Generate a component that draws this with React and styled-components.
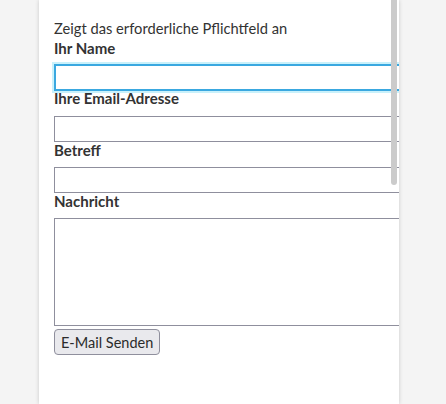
import React from "react";
import styled, { createGlobalStyle } from "styled-components";

const GlobalStyle = createGlobalStyle`
  html, body {
    margin: 0;
    padding: 0;
    background: #f4f4f4;
    height: 100%;
    overflow: hidden;
  }
  #root {
    height: 100%;
  }
`;

const Page = styled.div`
  height: 404px;
  padding-left: 39px;
  overflow: hidden;
`;

const Card = styled.div`
  position: relative;
  width: 360px;
  height: 404px;
  background: #fff;
  box-shadow: 0 0 4px rgba(0, 0, 0, 0.18);
  overflow: hidden;
`;

const Form = styled.form`
  width: 400px;
  margin-top: -10px;
  padding-left: 15px;
  font-family: "Lato", "Open Sans", sans-serif;
  color: #333;
`;

const Required = styled.p`
  margin: 0;
  padding-left: 54px;
  font-size: 14px;
  line-height: 20px;
  color: #d00;
`;

const Intro = styled.p`
  margin: 8px 0 0;
  font-size: 14.7px;
  line-height: 20px;
`;

const Label = styled.label`
  display: block;
  font-size: 15px;
  font-weight: 700;
  line-height: 20px;
  margin: ${(p) => p.$top ?? -2}px 0 ${(p) => p.$bottom ?? 7}px;
`;

const Input = styled.input`
  display: block;
  box-sizing: border-box;
  width: 100%;
  height: ${(p) => (p.$focused ? 27 : 26)}px;
  margin: 0;
  border: ${(p) => (p.$focused ? "2px solid #3aa8e0" : "1px solid #8f8f9d")};
  box-shadow: ${(p) => (p.$focused ? "0 0 0 2px #c9f1fb" : "none")};
  border-radius: 0;
  background: #fff;
  font: inherit;
  outline: none;
`;

const TextArea = styled.textarea`
  display: block;
  box-sizing: border-box;
  width: 100%;
  height: 108px;
  margin: 0;
  border: 1px solid #8f8f9d;
  resize: none;
  font: inherit;
`;

const Button = styled.button`
  display: block;
  margin-top: 3px;
  height: 26px;
  padding: 0 6px;
  border: 1px solid #8f8f9d;
  border-radius: 4px;
  background: #e9e9ed;
  color: #2b2b2b;
  font-family: inherit;
  font-size: 14.5px;
`;

const Scrollbar = styled.div`
  position: absolute;
  top: 0;
  right: 2px;
  width: 6px;
  height: 185px;
  border-radius: 0 0 3px 3px;
  background: #cbcbcb;
`;

export default function App() {
  return (
    <>
      <GlobalStyle />
      <Page>
        <Card>
          <Form onSubmit={(e) => e.preventDefault()}>
            <Required>*</Required>
            <Intro>Zeigt das erforderliche Pflichtfeld an</Intro>
            <Label $top={0} $bottom={6}>Ihr Name</Label>
            <Input $focused />
            <Label $top={-3} $bottom={8}>Ihre Email-Adresse</Label>
            <Input />
            <Label>Betreff</Label>
            <Input />
            <Label>Nachricht</Label>
            <TextArea />
            <Button type="submit">E-Mail Senden</Button>
          </Form>
          <Scrollbar />
        </Card>
      </Page>
    </>
  );
}
